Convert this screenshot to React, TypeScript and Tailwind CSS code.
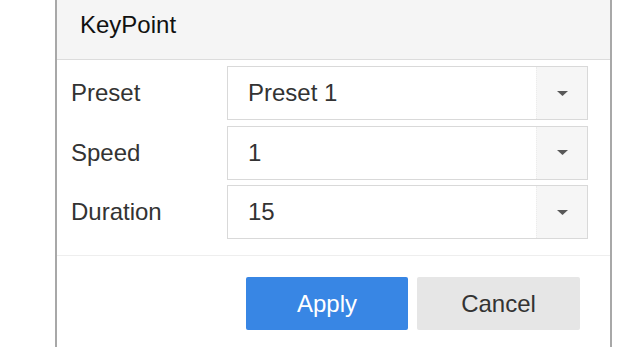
import React from "react";

const rows = [
  { label: "Preset", value: "Preset 1" },
  { label: "Speed", value: "1" },
  { label: "Duration", value: "15" },
];

function Caret() {
  return (
    <svg width="11" height="5" viewBox="0 0 11 5" className="block">
      <polygon points="0,0 11,0 5.5,5" fill="#595959" />
    </svg>
  );
}

export default function App() {
  return (
    <div
      className="w-[640px] h-[347px] bg-white overflow-hidden flex"
      style={{ fontFamily: '"Liberation Sans", Arial, Helvetica, sans-serif' }}
    >
      <div className="ml-[55px] w-[557px] h-full border-x-2 border-[#a8a8a8] flex flex-col bg-white">
        <div className="h-[60px] shrink-0 bg-[#f5f5f5] border-b border-[#dcdcdc] pl-[23px] pt-[11px]">
          <span className="text-[24px] leading-[28px] text-[#111111]">KeyPoint</span>
        </div>
        <div className="pt-[6px] flex flex-col gap-[5.5px]">
          {rows.map((r) => (
            <div key={r.label} className="flex items-center pl-[14px]">
              <div className="w-[156px] text-[24px] leading-[28px] text-[#333333]">{r.label}</div>
              <div className="w-[361px] h-[54px] border border-[#d9d9d9] flex bg-white">
                <div className="flex-1 flex items-center pl-[20px] text-[24px] leading-[28px] text-[#333333]">
                  {r.value}
                </div>
                <div className="w-[51px] h-full bg-[#f6f6f6] border-l border-dotted border-[#ececec] flex items-center justify-center">
                  <Caret />
                </div>
              </div>
            </div>
          ))}
        </div>
        <div className="mt-[16px] h-px bg-[#eeeeee]" />
        <div className="pt-[21px] flex justify-end pr-[30px] gap-[9px]">
          <button className="w-[162px] h-[53px] rounded-[2px] bg-[#3886e4] text-white text-[24px] leading-[28px]">
            Apply
          </button>
          <button className="w-[163px] h-[53px] rounded-[2px] bg-[#e6e6e6] text-[#333333] text-[24px] leading-[28px]">
            Cancel
          </button>
        </div>
      </div>
    </div>
  );
}
